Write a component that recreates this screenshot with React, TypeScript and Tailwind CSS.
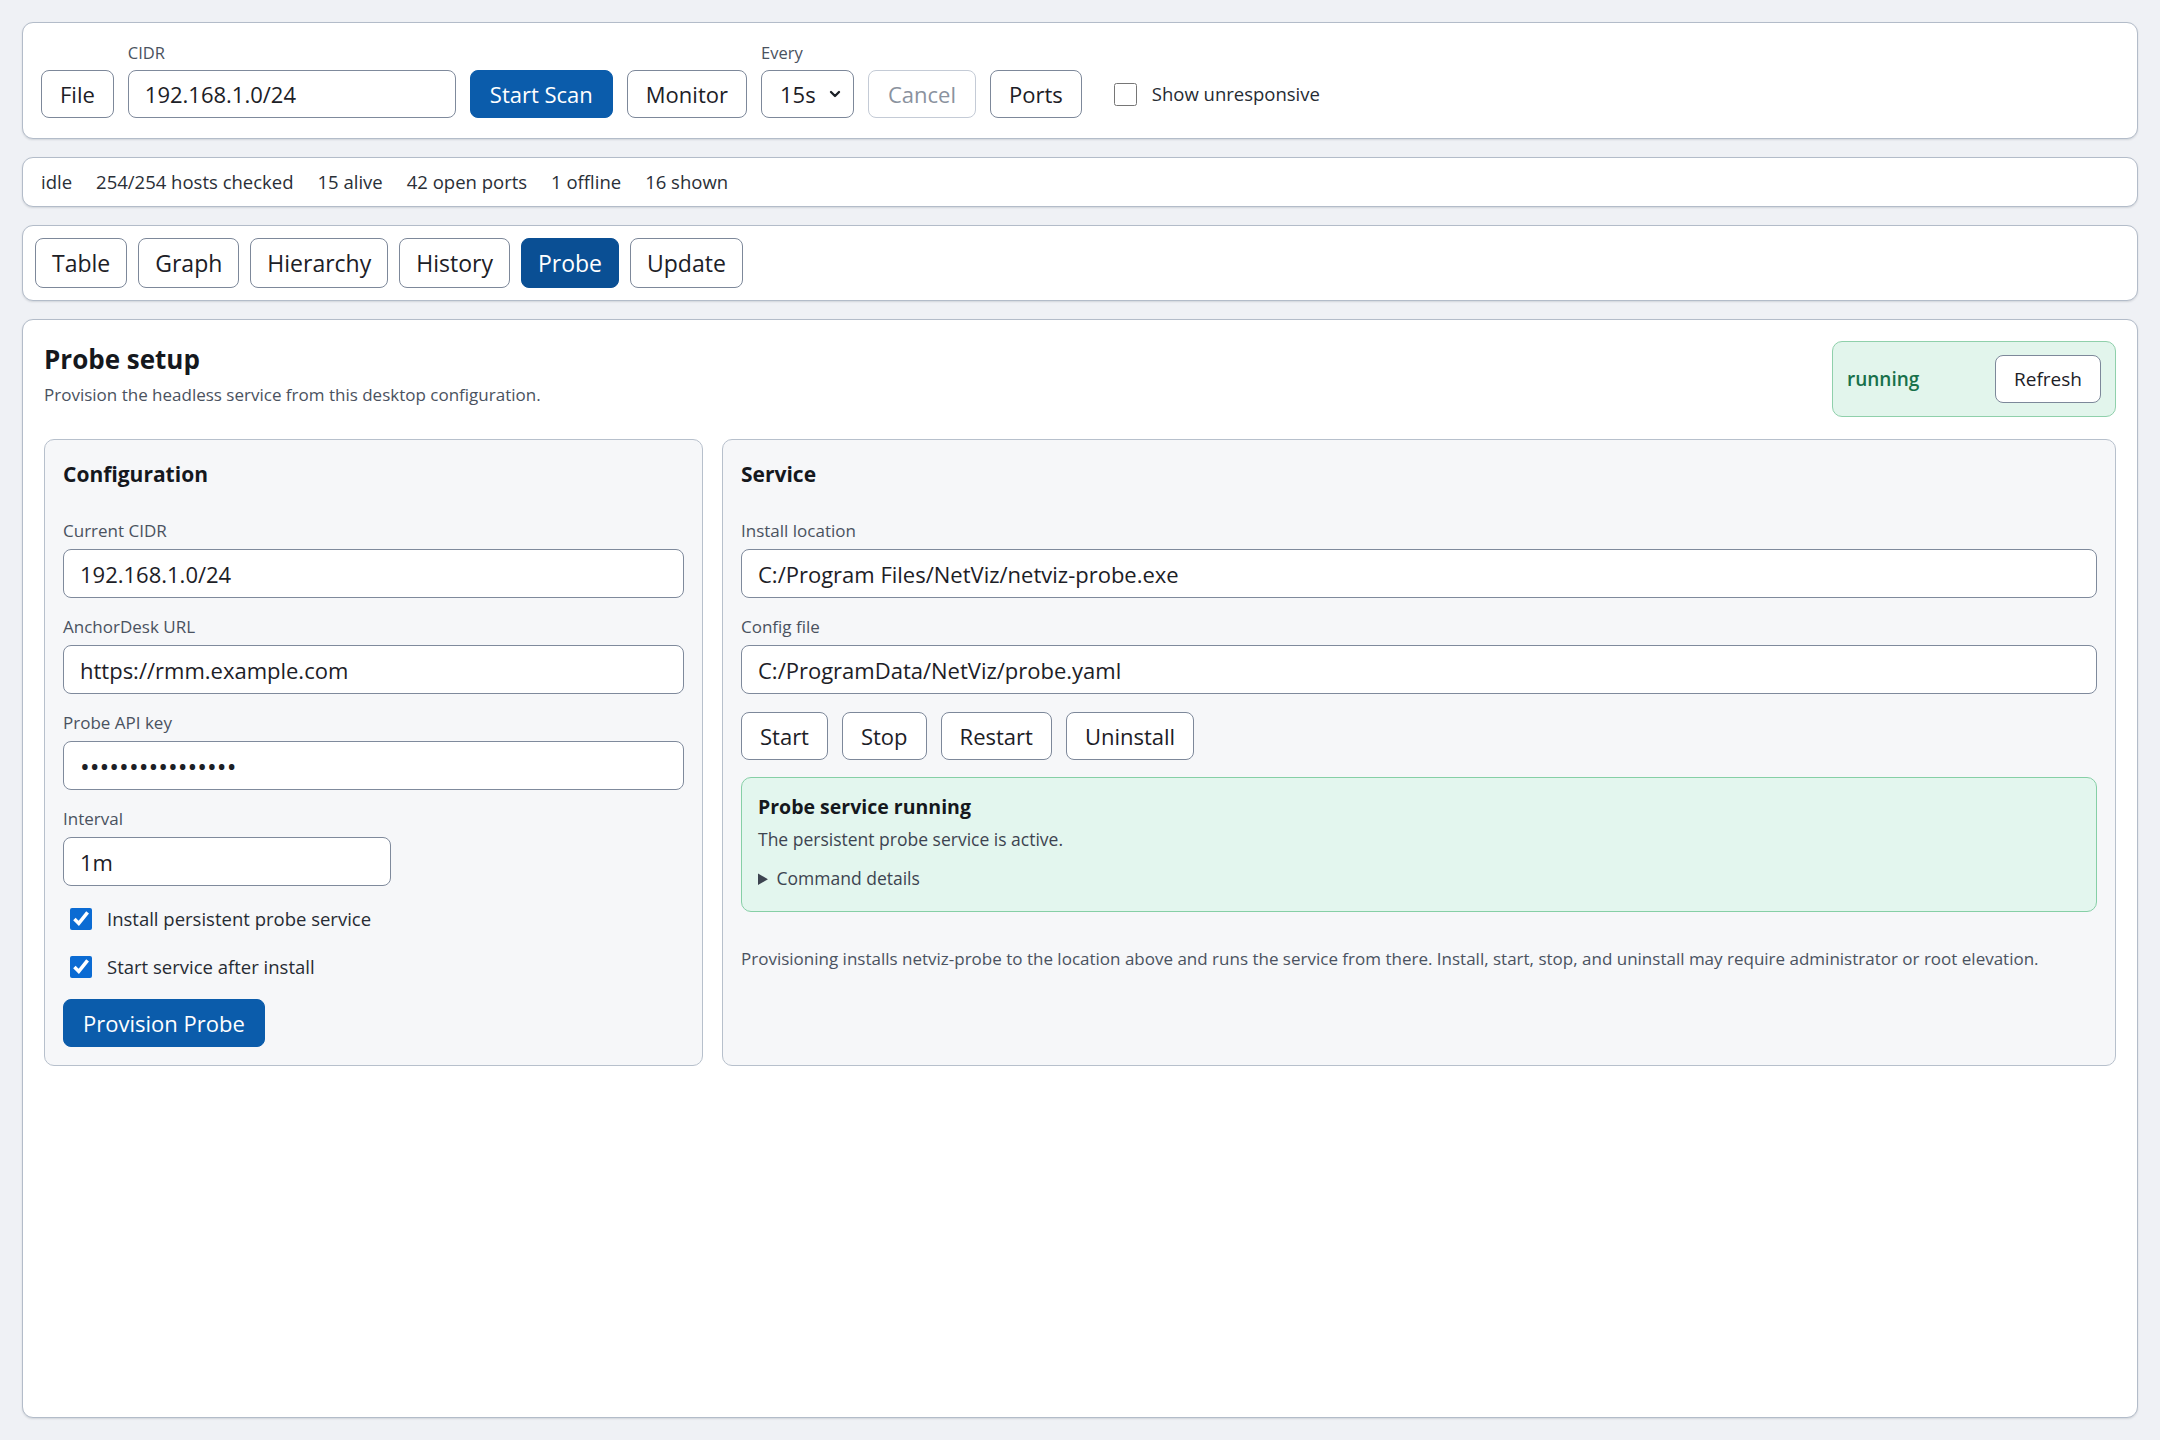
import { ChevronDown } from "lucide-react";

const panel =
  "rounded-[11px] border border-[#b3bcc9] bg-white shadow-[0_1px_2px_rgba(30,41,59,0.14)]";
const outline = "rounded-[8px] border border-[#7d889a] bg-white text-[#1c2026] leading-none whitespace-nowrap";
const filled = "rounded-[8px] border text-white leading-none whitespace-nowrap";
const btn = `${outline} h-[48px] px-[18px] text-[22px]`;
const primary = `${filled} h-[48px] px-[19px] text-[22px] border-[#0b5cab] bg-[#0b5cab]`;
const inputBase =
  "w-full rounded-[8px] border border-[#7f8a9c] bg-white px-[16px] text-[#1c2026] outline-none";

function Field({ label, value, type = "text", width }: { label: string; value: string; type?: string; width?: string }) {
  return (
    <label className={`flex flex-col gap-[6px] ${width ?? ""}`}>
      <span className="text-[17px] leading-[24px] text-[#4a5260]">{label}</span>
      <input
        type={type}
        defaultValue={value}
        className={`${inputBase} h-[49px] ${type === "password" ? "text-[26px]" : "text-[22px]"}`}
      />
    </label>
  );
}

function Check({ label }: { label: string }) {
  return (
    <label className="flex h-[31px] items-center gap-[15px] pl-[7px] text-[18.5px] text-[#262b33]">
      <input type="checkbox" defaultChecked className="h-[22px] w-[22px] accent-[#0b6bd3]" />
      {label}
    </label>
  );
}

export default function App() {
  return (
    <div className="flex min-h-screen flex-col gap-[18px] bg-[#eff1f5] p-[22px] font-['Open_Sans',sans-serif] text-[#1c2026]">
      {/* scan controls */}
      <div className={`${panel} flex items-end gap-[14px] px-[18px] pb-[20px] pt-[18px]`}>
        <button className={btn}>File</button>
        <label className="flex w-[328px] flex-col gap-[5px]">
          <span className="text-[16.5px] leading-[24px] text-[#4a5260]">CIDR</span>
          <input defaultValue="192.168.1.0/24" className={`${inputBase} h-[48px] text-[22px]`} />
        </label>
        <button className={primary}>Start Scan</button>
        <button className={btn}>Monitor</button>
        <div className="flex flex-col gap-[5px]">
          <span className="text-[16.5px] leading-[24px] text-[#4a5260]">Every</span>
          <div className="flex h-[48px] w-[93px] items-center justify-between rounded-[8px] border border-[#7d889a] bg-white pl-[18px] pr-[10px] text-[22px]">
            15s
            <ChevronDown size={16} strokeWidth={3.5} />
          </div>
        </div>
        <button className="h-[48px] rounded-[8px] border border-[#c4cbd6] bg-white px-[19px] text-[22px] leading-none text-[#8a929e]">
          Cancel
        </button>
        <button className={btn}>Ports</button>
        <label className="ml-[18px] flex h-[48px] items-center gap-[15px] text-[18.5px] text-[#262b33]">
          <input type="checkbox" className="h-[23px] w-[23px] accent-[#0b6bd3]" />
          Show unresponsive
        </label>
      </div>

      {/* status */}
      <div className={`${panel} flex gap-[24px] px-[18px] py-[11px] text-[18.5px] leading-[26px] text-[#2a2f37]`}>
        <span>idle</span>
        <span>254/254 hosts checked</span>
        <span>15 alive</span>
        <span>42 open ports</span>
        <span>1 offline</span>
        <span>16 shown</span>
      </div>

      {/* tabs */}
      <div className={`${panel} flex gap-[11px] p-[12px]`}>
        {["Table", "Graph", "Hierarchy", "History", "Probe", "Update"].map((t) =>
          t === "Probe" ? (
            <button key={t} className={`${filled} h-[50px] border-[#0a4f94] bg-[#0a4f94] px-[16px] text-[23px]`}>
              {t}
            </button>
          ) : (
            <button key={t} className={`${outline} h-[50px] px-[16px] text-[23px]`}>
              {t}
            </button>
          )
        )}
      </div>

      {/* probe view */}
      <div className={`${panel} flex flex-1 flex-col p-[21px]`}>
        <div className="flex items-start justify-between">
          <div>
            <h1 className="text-[26px] font-bold leading-[36px] text-[#15181d]">Probe setup</h1>
            <p className="mt-[6px] text-[17px] leading-[24px] text-[#4a5260]">
              Provision the headless service from this desktop configuration.
            </p>
          </div>
          <div className="flex w-[284px] items-center justify-between rounded-[10px] border border-[#8fd0ab] bg-[#e2f5ec] py-[13px] pl-[14px] pr-[14px]">
            <span className="text-[19px] font-semibold text-[#17704a]">running</span>
            <button className="h-[48px] rounded-[8px] border border-[#7d889a] bg-white px-[18px] text-[19px] text-[#1c2026]">
              Refresh
            </button>
          </div>
        </div>

        <div className="mt-[22px] grid grid-cols-[659px_1fr] gap-[19px]">
          <section className="rounded-[10px] border border-[#b7c0cc] bg-[#f6f7f9] p-[18px]">
            <h2 className="mb-[29px] text-[21px] font-bold leading-[32px] text-[#15181d]">Configuration</h2>
            <div className="flex flex-col gap-[17px]">
              <Field label="Current CIDR" value="192.168.1.0/24" />
              <Field label="AnchorDesk URL" value="https://rmm.example.com" />
              <Field label="Probe API key" value="abcdefghijklmnop" type="password" />
              <Field label="Interval" value="1m" width="w-[328px]" />
            </div>
            <div className="mt-[17px] flex flex-col gap-[17px]">
              <Check label="Install persistent probe service" />
              <Check label="Start service after install" />
            </div>
            <button className={`${primary} mt-[17px]`}>Provision Probe</button>
          </section>

          <section className="rounded-[10px] border border-[#b7c0cc] bg-[#f6f7f9] p-[18px]">
            <h2 className="mb-[29px] text-[21px] font-bold leading-[32px] text-[#15181d]">Service</h2>
            <div className="flex flex-col gap-[17px]">
              <Field label="Install location" value="C:/Program Files/NetViz/netviz-probe.exe" />
              <Field label="Config file" value="C:/ProgramData/NetViz/probe.yaml" />
            </div>
            <div className="mt-[18px] flex gap-[14px]">
              <button className={btn}>Start</button>
              <button className={btn}>Stop</button>
              <button className={btn}>Restart</button>
              <button className={btn}>Uninstall</button>
            </div>
            <div className="mt-[17px] rounded-[10px] border border-[#86cfa6] bg-[#e3f6ee] px-[16px] pb-[20px] pt-[15px]">
              <div className="text-[19.5px] font-bold leading-[28px] text-[#15181d]">Probe service running</div>
              <div className="mt-[6px] text-[17.5px] leading-[24px] text-[#3d4450]">
                The persistent probe service is active.
              </div>
              <details className="mt-[14px] text-[17.5px] leading-[26px] text-[#3d4450]">
                <summary className="cursor-pointer">Command details</summary>
              </details>
            </div>
            <p className="mt-[35px] text-[17px] leading-[24px] text-[#4a5260]">
              Provisioning installs netviz-probe to the location above and runs the service from there. Install, start,
              stop, and uninstall may require administrator or root elevation.
            </p>
          </section>
        </div>
      </div>
    </div>
  );
}
